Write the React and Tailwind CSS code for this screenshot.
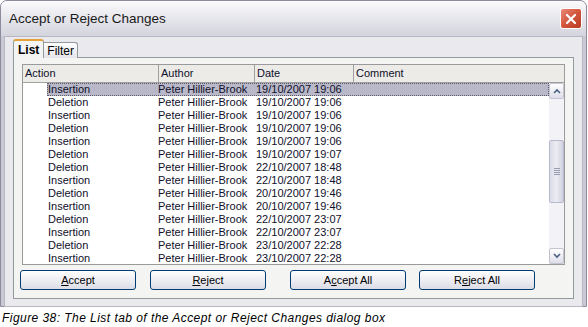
const rows = [
  ["Insertion", "19/10/2007 19:06"],
  ["Deletion", "19/10/2007 19:06"],
  ["Insertion", "19/10/2007 19:06"],
  ["Deletion", "19/10/2007 19:06"],
  ["Insertion", "19/10/2007 19:06"],
  ["Deletion", "19/10/2007 19:07"],
  ["Deletion", "22/10/2007 18:48"],
  ["Insertion", "22/10/2007 18:48"],
  ["Deletion", "20/10/2007 19:46"],
  ["Insertion", "20/10/2007 19:46"],
  ["Deletion", "22/10/2007 23:07"],
  ["Insertion", "22/10/2007 23:07"],
  ["Deletion", "23/10/2007 22:28"],
  ["Insertion", "23/10/2007 22:28"],
];

function Btn({ pre, u, post }) {
  return (
    <button className="w-[116px] h-[20px] rounded-[3px] border border-[#003c74] bg-gradient-to-b from-white to-[#dcdce6] text-[11px] text-black leading-none">
      {pre}
      <span className="underline">{u}</span>
      {post}
    </button>
  );
}

export default function App() {
  return (
    <div className="w-[588px] h-[327px] bg-white font-['Liberation_Sans',Arial,sans-serif] overflow-hidden">
      {/* WINDOW */}
      <div className="w-[587px] h-[307px] flex flex-col rounded-t-[7px] border border-[#8c8c9e] bg-[#c9c9d4] px-[3px] pb-[3px]">
        {/* TITLE BAR */}
        <div className="h-[35px] shrink-0 flex items-center justify-between -mx-[3px] pl-[8px] pr-[4px] bg-gradient-to-b from-[#fbfbfd] via-[#e6e6ec] to-[#d4d4de] rounded-t-[6px]">
          <span className="text-[13.5px] text-[#1a1a1a] pt-[2px]">Accept or Reject Changes</span>
          <div className="w-[22px] h-[21px] rounded-[3px] border border-white bg-gradient-to-br from-[#e88a78] via-[#d3553c] to-[#b83a24] flex items-center justify-center">
            <svg width="12" height="12" viewBox="0 0 12 12">
              <path d="M2 2 L10 10 M10 2 L2 10" stroke="white" strokeWidth="2.2" strokeLinecap="round" />
            </svg>
          </div>
        </div>

        {/* BODY */}
        <div className="flex-1 flex flex-col bg-[#e9e9ee] border border-[#b8b8c4] pt-[2px] px-[8px] pb-[7px]">
          {/* TABS */}
          <div className="flex items-end h-[19px] relative z-10 -mb-px">
            <div className="h-[19px] px-[4px] flex items-center bg-[#f4f4f4] border border-[#919b9c] border-b-0 border-t-2 border-t-[#e6a23a] rounded-t-[3px] text-[12px] font-bold text-black">
              List
            </div>
            <div className="h-[16px] px-[3px] flex items-center bg-gradient-to-b from-white to-[#e4e4ea] border border-[#919b9c] border-l-0 border-b-0 rounded-tr-[3px] text-[12px] text-black">
              Filter
            </div>
          </div>

          {/* TAB PANEL */}
          <div className="flex-1 flex flex-col border border-[#919b9c] bg-[#f4f4f2] pt-[6px] pl-[8px] pr-[8px] pb-[8px]">
            {/* LIST BOX */}
            <div className="h-[201px] shrink-0 border border-[#9a9a9a] bg-white flex flex-col overflow-hidden text-[11px] text-[#10102a]">
              <div className="h-[18px] shrink-0 flex bg-[#ecebe8] border-b border-[#a0a0a0]">
                <div className="w-[136px] pl-[2px] flex items-center border-r border-[#a0a0a0]">Action</div>
                <div className="w-[96px] pl-[2px] flex items-center border-r border-[#a0a0a0]">Author</div>
                <div className="w-[99px] pl-[2px] flex items-center border-r border-[#a0a0a0]">Date</div>
                <div className="flex-1 pl-[2px] flex items-center">Comment</div>
              </div>
              <div className="flex-1 flex overflow-hidden">
                <div className="flex-1 flex flex-col overflow-hidden">
                  {rows.map(([action, date], i) => (
                    <div key={i} className="h-[13px] shrink-0 flex items-center leading-none">
                      <div
                        className={
                          i === 0
                            ? "ml-[24px] flex-1 h-full flex items-center bg-[#b8b8c9] outline outline-1 outline-dotted outline-offset-[-1px] outline-[#5a5a6a]"
                            : "ml-[24px] flex-1 h-full flex items-center"
                        }
                      >
                        <span className="w-[111px] pl-px">{action}</span>
                        <span className="w-[98px]">Peter Hillier-Brook</span>
                        <span>{date}</span>
                      </div>
                    </div>
                  ))}
                </div>
                {/* SCROLLBAR */}
                <div className="w-[15px] shrink-0 flex flex-col bg-[#f3f3f7]">
                  <div className="h-[16px] shrink-0 rounded-[2px] border border-[#c3c3d2] bg-gradient-to-b from-white to-[#dedeea] flex items-center justify-center">
                    <svg width="8" height="6" viewBox="0 0 8 6">
                      <path d="M1 5 L4 2 L7 5" stroke="#4d6185" strokeWidth="1.6" fill="none" />
                    </svg>
                  </div>
                  <div className="h-[41px] shrink-0" />
                  <div className="h-[63px] shrink-0 rounded-[2px] border border-[#b9b9cc] bg-gradient-to-r from-[#dcdce8] via-[#ececf4] to-[#d0d0e0] flex flex-col items-center justify-center gap-[1px]">
                    <div className="w-[6px] h-px bg-[#9a9ab0]" />
                    <div className="w-[6px] h-px bg-[#9a9ab0]" />
                    <div className="w-[6px] h-px bg-[#9a9ab0]" />
                    <div className="w-[6px] h-px bg-[#9a9ab0]" />
                  </div>
                  <div className="flex-1" />
                  <div className="h-[16px] shrink-0 rounded-[2px] border border-[#c3c3d2] bg-gradient-to-b from-white to-[#dedeea] flex items-center justify-center">
                    <svg width="8" height="6" viewBox="0 0 8 6">
                      <path d="M1 1 L4 4 L7 1" stroke="#4d6185" strokeWidth="1.6" fill="none" />
                    </svg>
                  </div>
                </div>
              </div>
            </div>

            {/* BUTTONS */}
            <div className="flex mt-[5px] -ml-[2px]">
              <Btn u="A" post="ccept" />
              <div className="w-[14px]" />
              <Btn u="R" post="eject" />
              <div className="w-[24px]" />
              <Btn pre="A" u="c" post="cept All" />
              <div className="w-[13px]" />
              <Btn pre="R" u="e" post="ject All" />
            </div>
          </div>
        </div>
      </div>

      {/* CAPTION */}
      <p className="pl-[2px] pt-[5px] text-[12px] italic tracking-[0.45px] text-black leading-none">
        Figure 38: The List tab of the Accept or Reject Changes dialog box
      </p>
    </div>
  );
}
